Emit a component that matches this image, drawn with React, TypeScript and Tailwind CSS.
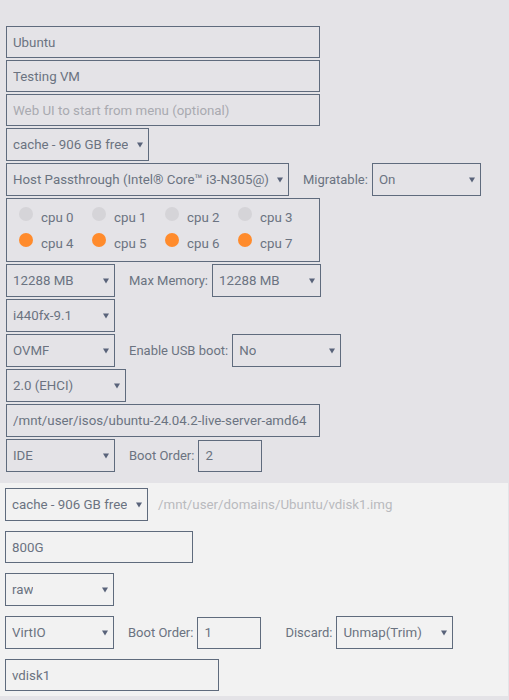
import React from 'react';

const border = 'border border-[#5f6b7d]';

const Arrow = () => (
  <svg className="absolute right-[5px] top-1/2 -translate-y-1/2" width="6" height="6" viewBox="0 0 6 6">
    <path d="M0 0.5h6L3 5.5z" fill="#59637a" />
  </svg>
);

const Select: React.FC<{ value: string; w: string }> = ({ value, w }) => (
  <div className={`relative h-[33px] shrink-0 ${w} ${border} flex items-center pl-[6px] pr-[14px] text-[13.3px]`}>
    <span className="overflow-hidden whitespace-nowrap">{value}</span>
    <Arrow />
  </div>
);

const TextBox: React.FC<{ value?: string; placeholder?: string; w: string; h?: string }> = ({
  value,
  placeholder,
  w,
  h = 'h-[32px]',
}) => (
  <input
    readOnly
    value={value ?? ''}
    placeholder={placeholder}
    className={`${h} ${w} shrink-0 ${border} bg-transparent pl-[6px] pr-[4px] outline-none text-[13.3px] text-[#6b7381] placeholder:text-[#a9aab0]`}
  />
);

const Label: React.FC<{ children: React.ReactNode; ml?: string }> = ({ children, ml = 'ml-[14px]' }) => (
  <span className={`${ml} mr-[4px] whitespace-nowrap`}>{children}</span>
);

const cpus = [
  { n: 0, on: false },
  { n: 1, on: false },
  { n: 2, on: false },
  { n: 3, on: false },
  { n: 4, on: true },
  { n: 5, on: true },
  { n: 6, on: true },
  { n: 7, on: true },
];

export default function App() {
  return (
    <div className="min-h-[700px] bg-[#e4e3e7] font-['Roboto','Liberation_Sans',sans-serif] text-[13px] text-[#6b7381]">
      {/* general settings */}
      <div className="pt-[26px] pl-[6px] pb-[11px] flex flex-col gap-[2px]">
        <TextBox value="Ubuntu" w="w-[314px]" />
        <TextBox value="Testing VM" w="w-[314px]" />
        <TextBox placeholder="Web UI to start from menu (optional)" w="w-[314px]" />
        <Select value="cache - 906 GB free" w="w-[143px]" />

        <div className="flex items-center">
          <Select value="Host Passthrough (Intel® Core™ i3-N305@)" w="w-[283px]" />
          <Label>Migratable:</Label>
          <Select value="On" w="w-[109px]" />
        </div>

        <div className={`h-[64px] w-[314px] ${border} pl-[12px] pt-[8px] grid grid-cols-[73px_73px_73px_73px] auto-rows-[26px]`}>
          {cpus.map((c) => (
            <div key={c.n} className="flex items-start">
              <span
                className={`w-[14px] h-[14px] rounded-full shrink-0 ${c.on ? 'bg-[#ff8b2c]' : 'bg-[#d5d4d8]'}`}
              />
              <span className="ml-[8px] mt-[3px] leading-4 text-[13.3px]">cpu {c.n}</span>
            </div>
          ))}
        </div>

        <div className="flex items-center">
          <Select value="12288 MB" w="w-[109px]" />
          <Label>Max Memory:</Label>
          <Select value="12288 MB" w="w-[109px]" />
        </div>

        <Select value="i440fx-9.1" w="w-[109px]" />

        <div className="flex items-center">
          <Select value="OVMF" w="w-[109px]" />
          <Label>Enable USB boot:</Label>
          <Select value="No" w="w-[109px]" />
        </div>

        <Select value="2.0 (EHCI)" w="w-[120px]" />

        <TextBox value="/mnt/user/isos/ubuntu-24.04.2-live-server-amd64" w="w-[314px]" h="h-[33px]" />

        <div className="flex items-center">
          <Select value="IDE" w="w-[109px]" />
          <Label>Boot Order:</Label>
          <TextBox value="2" w="w-[64px]" />
        </div>
      </div>

      {/* disk */}
      <div className="bg-[#f2f2f2] mr-[1px] px-[5px] py-[5px] flex flex-col gap-[10px]">
        <div className="flex items-center">
          <Select value="cache - 906 GB free" w="w-[143px]" />
          <span className="ml-[10px] text-[13.3px] text-[#b9babe]">/mnt/user/domains/Ubuntu/vdisk1.img</span>
        </div>

        <TextBox value="800G" w="w-[188px]" />

        <Select value="raw" w="w-[109px]" />

        <div className="flex items-center">
          <Select value="VirtIO" w="w-[109px]" />
          <Label>Boot Order:</Label>
          <TextBox value="1" w="w-[64px]" />
          <Label ml="ml-[24px]">Discard:</Label>
          <Select value="Unmap(Trim)" w="w-[117px]" />
        </div>

        <TextBox value="vdisk1" w="w-[214px]" />
      </div>
    </div>
  );
}
